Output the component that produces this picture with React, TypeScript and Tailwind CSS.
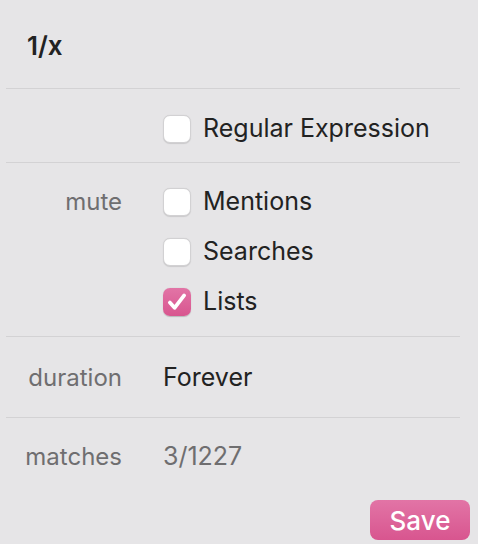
import React from "react";

const font = { fontFamily: "Inter, 'Noto Sans', sans-serif" };

function Check({ checked }: { checked?: boolean }) {
  if (checked) {
    return (
      <span className="flex h-[28px] w-[28px] items-center justify-center rounded-[7px] bg-gradient-to-b from-[#e274a6] to-[#d8558f] shadow-[0_0.5px_1px_rgba(0,0,0,0.2)]">
        <svg width="22" height="22" viewBox="0 0 20 20" fill="none">
          <path d="M3.5 10.5l4.3 4.8L16.5 4" stroke="white" strokeWidth="3.4" strokeLinecap="round" strokeLinejoin="round" />
        </svg>
      </span>
    );
  }
  return (
    <span className="block h-[28px] w-[28px] rounded-[7px] border border-[#d2d1d3] bg-white shadow-[0_0.5px_1px_rgba(0,0,0,0.12)]" />
  );
}

function Row({ label, children }: { label?: string; children: React.ReactNode }) {
  return (
    <div className="flex h-[50px] items-center">
      <div className="w-[122px] text-right text-[24px] text-[#6f6e70]">{label}</div>
      <div className="ml-[41px] flex items-center gap-[12px] text-[25px]">{children}</div>
    </div>
  );
}

function Divider() {
  return <div className="ml-[6px] h-px w-[454px] bg-[#d3d2d4]" />;
}

export default function App() {
  return (
    <div className="h-[544px] w-[478px] overflow-hidden bg-[#e6e5e7] text-[#222222]" style={font}>
      <div className="flex h-[88px] items-center pl-[27px] pt-[2px] text-[26px] font-semibold">1/x</div>
      <Divider />
      <div className="pt-[15px] pb-[8px]">
        <Row>
          <Check />
          <span>Regular Expression</span>
        </Row>
      </div>
      <Divider />
      <div className="pt-[14px] pb-[9px]">
        <Row label="mute">
          <Check />
          <span>Mentions</span>
        </Row>
        <Row>
          <Check />
          <span>Searches</span>
        </Row>
        <Row>
          <Check checked />
          <span>Lists</span>
        </Row>
      </div>
      <Divider />
      <div className="pt-[16px] pb-[14px]">
        <Row label="duration">
          <span>Forever</span>
        </Row>
      </div>
      <Divider />
      <div className="pt-[14px]">
        <Row label="matches">
          <span className="text-[#6f6e70]">3/1227</span>
        </Row>
      </div>
      <div className="flex justify-end pr-[8px] pt-[18px]">
        <button className="flex h-[40px] w-[100px] items-center justify-center rounded-[8px] bg-gradient-to-b from-[#e274a6] to-[#d8558f] text-[26px] font-medium text-white">
          Save
        </button>
      </div>
    </div>
  );
}
